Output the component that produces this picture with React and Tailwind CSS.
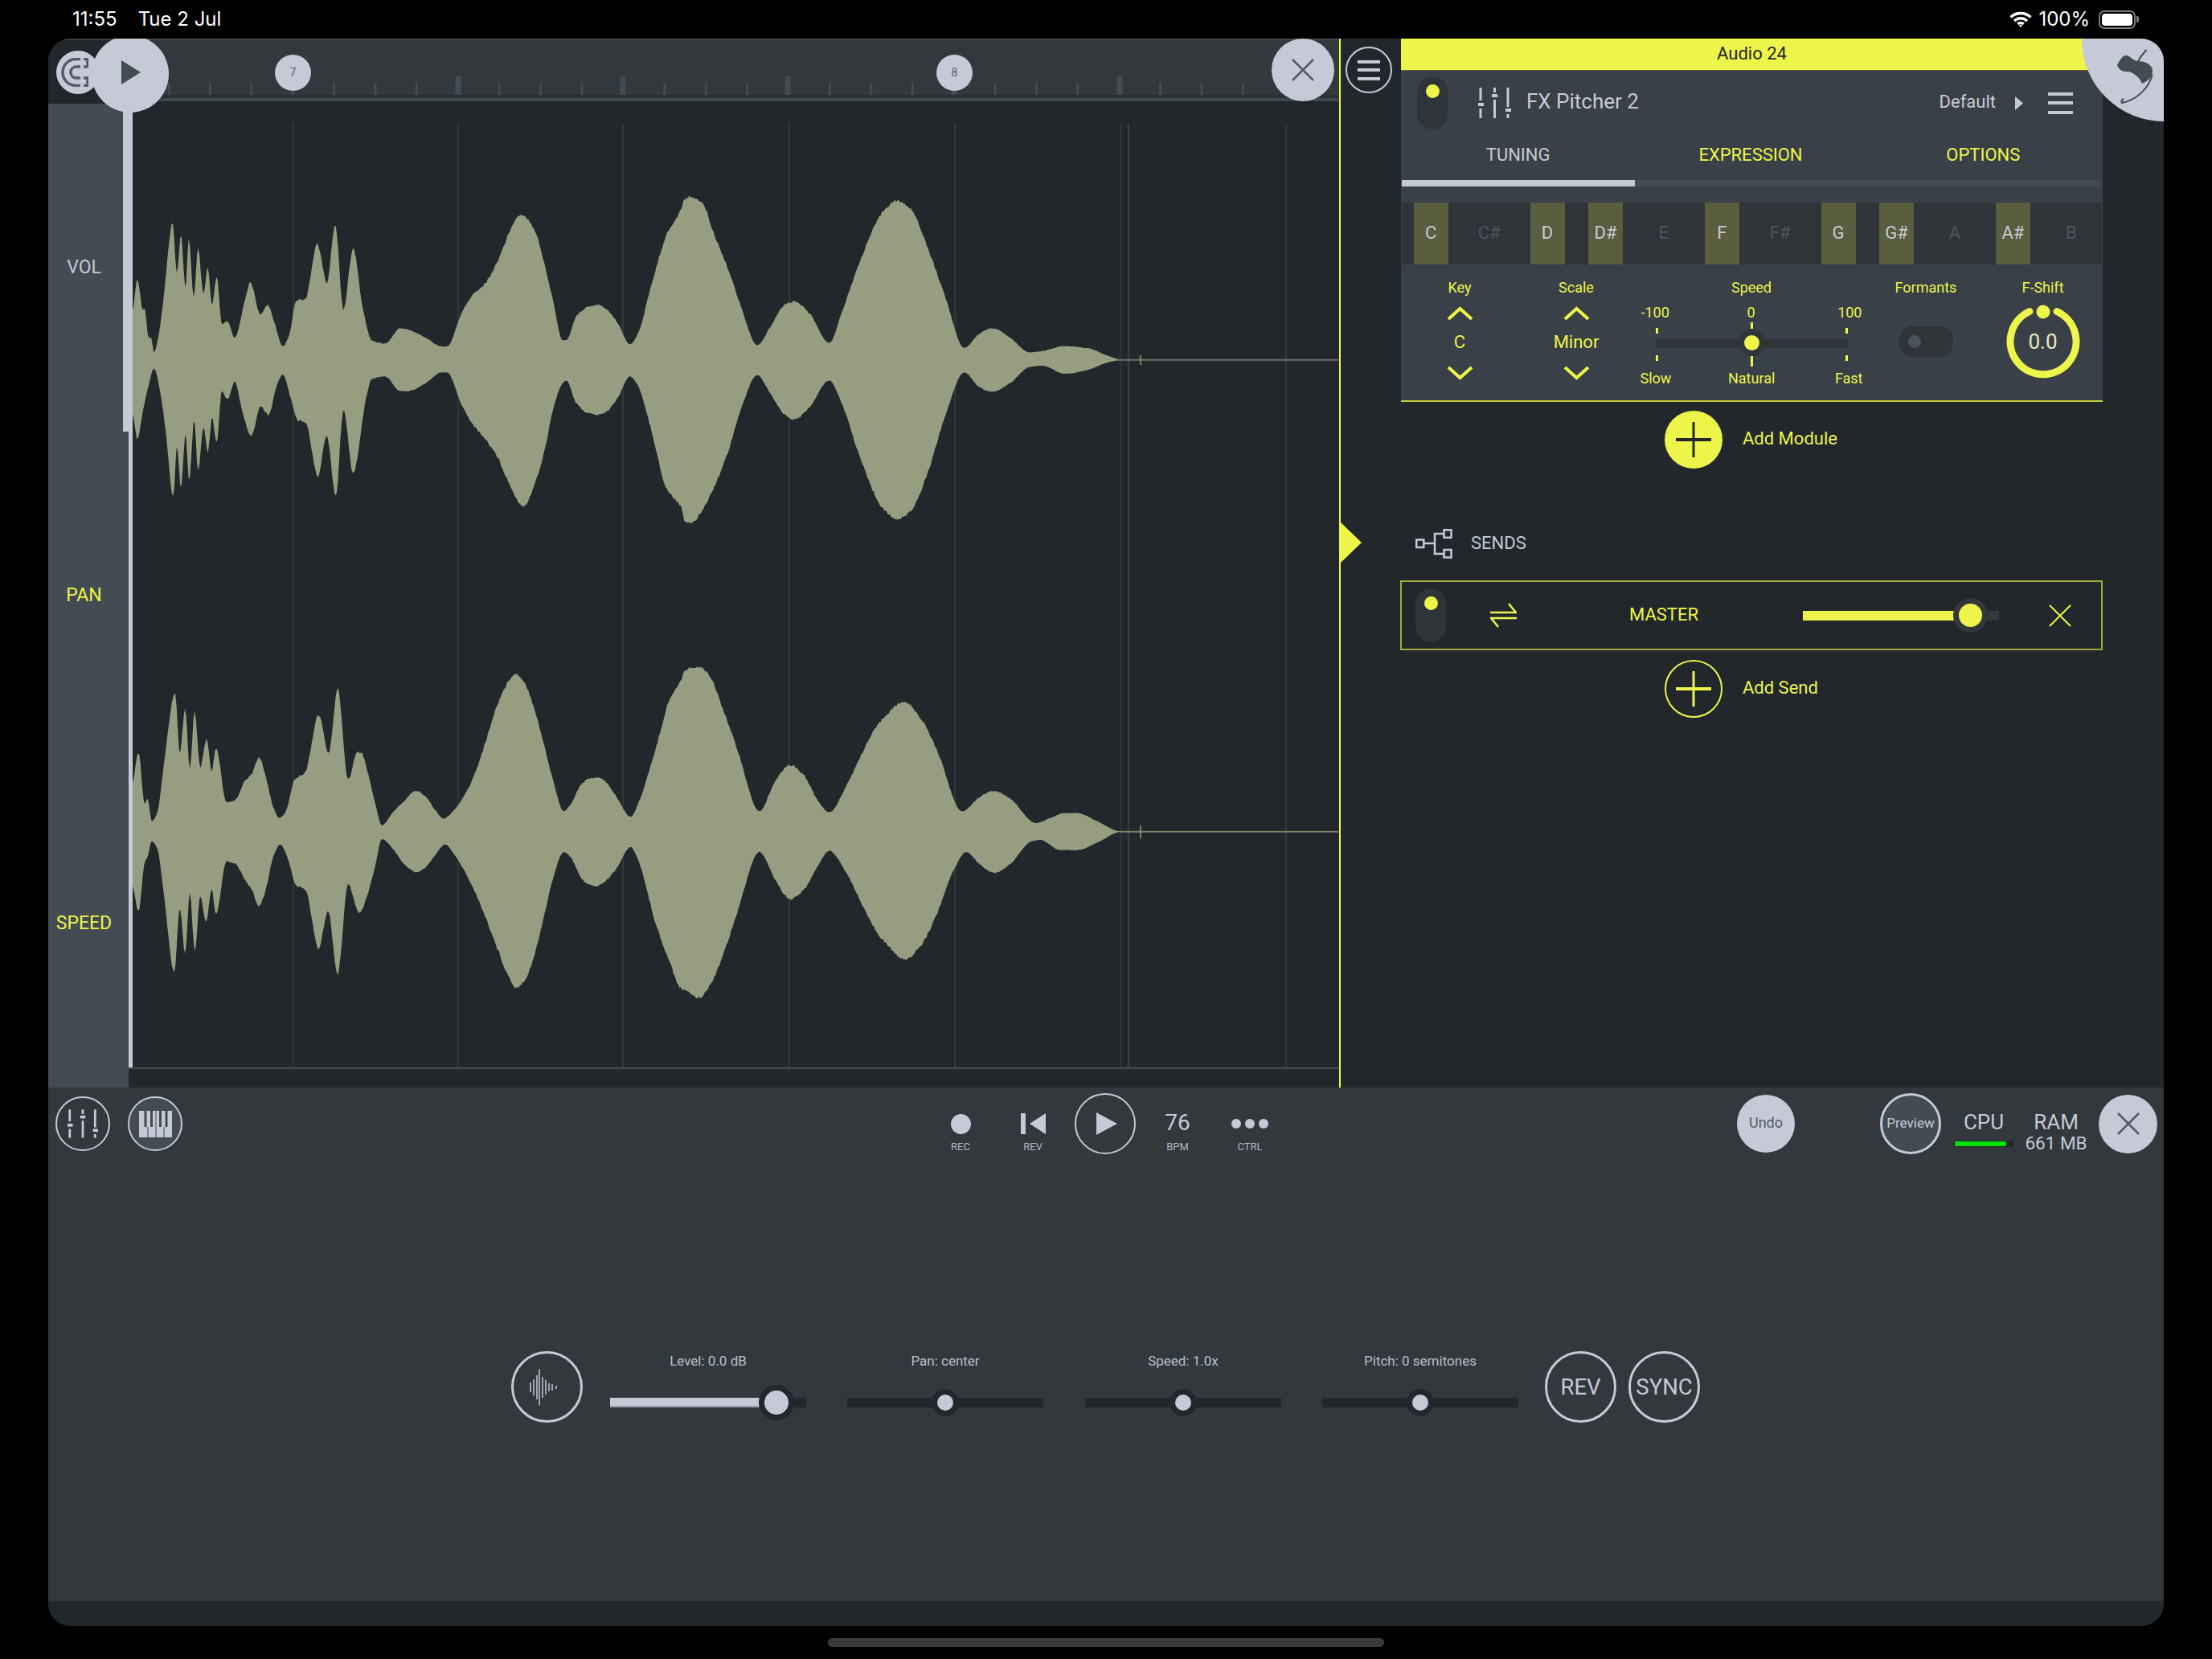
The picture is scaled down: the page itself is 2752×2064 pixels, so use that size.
import React from "react";

// waveform envelopes, read off the zoomed crops (crop coords, converted below)
const part = (pts, x0, sx, y0) => pts.map(([x, y]) => [x0 + x / sx, y0 + y / 3]);

const TOP_UP = [
  ...part([[15,560],[35,490],[47,380],[62,495],[67,490],[78,600],[85,600],[93,655],[105,600],[120,450],[145,170],[157,360],[168,215],[181,420],[190,228],[204,450],[216,268],[231,440],[243,340],[255,480],[268,372],[282,550],[298,540],[318,600],[345,470],[362,395],[390,515],[410,477],[430,550],[452,632],[470,590],[490,460],[515,455],[548,250],[575,395],[598,178],[621,495],[648,268],[675,490],[700,610],[737,622],[780,565],[800,570],[850,600],[895,633],[910,633],[950,510],[985,435],[1015,400],[1045,330],[1075,235],[1095,170],[1117,140],[1155,200],[1180,320],[1205,460],[1232,610],[1242,610],[1270,520],[1300,488],[1325,478],[1350,490],[1385,545],[1420,625],[1440,590],[1480,400],[1520,220],[1567,100]], 150, 2.24, 220),
  ...part([[0,85],[20,75],[45,100],[70,210],[100,330],[130,470],[170,628],[200,560],[235,475],[255,465],[290,510],[335,620],[365,500],[400,340],[435,200],[465,115],[490,90],[525,125],[560,260],[600,440],[645,638],[680,585],[710,565],[750,600],[795,655],[825,650],[875,632],[930,640],[970,665],[998,680],[1010,683]], 850, 1.845, 220),
];
const TOP_DOWN = [
  ...part([[15,810],[35,890],[47,978],[62,875],[78,780],[93,715],[110,800],[125,940],[147,1195],[157,1010],[168,1160],[181,960],[191,1140],[205,910],[216,1100],[231,935],[243,1030],[255,900],[268,995],[282,800],[298,830],[318,765],[340,880],[365,968],[390,855],[412,890],[435,780],[452,738],[475,830],[495,910],[515,915],[550,1118],[574,965],[600,1190],[621,870],[648,1105],[685,820],[700,755],[737,745],[780,800],[800,800],[850,770],[895,730],[910,730],[950,850],[985,930],[1020,985],[1050,1045],[1085,1150],[1122,1228],[1160,1125],[1185,1000],[1205,870],[1232,770],[1242,760],[1270,845],[1300,880],[1325,888],[1350,880],[1385,825],[1420,745],[1440,775],[1480,950],[1520,1160],[1567,1250]], 150, 2.24, 220),
  ...part([[0,1280],[20,1290],[45,1240],[70,1160],[100,1040],[130,880],[170,740],[200,810],[235,890],[255,905],[290,860],[335,760],[365,850],[400,1020],[435,1170],[465,1250],[490,1278],[525,1240],[560,1110],[600,900],[645,730],[680,785],[710,802],[750,770],[795,710],[825,705],[875,735],[930,720],[970,695],[998,685],[1010,683]], 850, 1.845, 220),
];
const BOT_UP = [
  ...part([[15,590],[35,515],[50,405],[67,600],[75,580],[87,665],[103,630],[120,460],[152,185],[165,410],[180,248],[193,470],[206,255],[222,465],[240,360],[254,480],[266,393],[295,595],[320,585],[345,518],[365,490],[385,428],[405,500],[425,610],[442,653],[460,630],[485,510],[515,480],[552,268],[580,410],[605,170],[634,510],[660,408],[670,408],[690,490],[710,600],[728,680],[760,630],[790,590],[822,552],[850,572],[875,620],[900,655],[925,630],[970,540],[1010,400],[1050,230],[1080,145],[1098,115],[1120,135],[1150,230],[1180,380],[1205,510],[1235,628],[1255,600],[1285,525],[1320,502],[1345,510],[1380,570],[1422,648],[1445,590],[1490,400],[1530,210],[1567,120]], 150, 2.24, 800),
  ...part([[0,105],[35,88],[60,120],[90,240],[125,400],[175,628],[210,520],[245,455],[275,490],[310,590],[335,632],[375,530],[430,350],[470,260],[508,220],[545,280],[585,410],[640,628],[680,575],[712,552],[750,580],[810,672],[840,655],[875,635],[905,635],[950,665],[1005,703]], 850, 1.845, 800),
];
const BOT_DOWN = [
  ...part([[15,830],[35,910],[50,1000],[67,820],[75,800],[87,740],[103,770],[120,930],[150,1230],[165,990],[180,1160],[193,935],[207,1155],[222,945],[238,1045],[254,920],[266,1015],[295,815],[320,825],[345,880],[365,920],[385,980],[405,920],[425,800],[445,752],[465,800],[490,905],[515,920],[552,1140],[578,1000],[605,1235],[634,900],[665,1008],[690,930],[710,830],[728,732],[760,770],[790,825],[825,855],[855,830],[880,785],[905,752],[930,790],[970,880],[1010,1000],[1050,1140],[1080,1240],[1102,1285],[1125,1260],[1150,1180],[1180,1020],[1205,880],[1235,780],[1255,800],[1285,880],[1320,908],[1345,895],[1380,845],[1422,762],[1445,820],[1490,1040],[1530,1190],[1567,1295]], 150, 2.24, 800),
  ...part([[0,1290],[35,1325],[60,1280],[90,1170],[125,1000],[175,780],[210,880],[245,955],[275,925],[310,830],[335,775],[375,860],[430,1040],[470,1130],[508,1180],[545,1130],[585,1000],[620,850],[650,780],[680,825],[715,858],[750,825],[800,740],[820,735],[865,773],[905,773],[950,745],[1005,705]], 850, 1.845, 800),
];

// monotone cubic, so the lobes come out round and the spikes stay put
const slope = (pts, i) => {
  if (i <= 0 || i >= pts.length - 1) return 0;
  const d0 = (pts[i][1] - pts[i - 1][1]) / Math.max(pts[i][0] - pts[i - 1][0], 0.01);
  const d1 = (pts[i + 1][1] - pts[i][1]) / Math.max(pts[i + 1][0] - pts[i][0], 0.01);
  if (d0 * d1 <= 0) return 0;
  return (2 * d0 * d1) / (d0 + d1);
};

const sample = (pts, x) => {
  for (let i = 1; i < pts.length; i++) {
    if (x <= pts[i][0]) {
      const [x0, y0] = pts[i - 1];
      const [x1, y1] = pts[i];
      const h = Math.max(x1 - x0, 0.01);
      const t = Math.min(Math.max((x - x0) / h, 0), 1);
      const m0 = slope(pts, i - 1);
      const m1 = slope(pts, i);
      return (
        (2 * t ** 3 - 3 * t ** 2 + 1) * y0 +
        (t ** 3 - 2 * t ** 2 + t) * h * m0 +
        (-2 * t ** 3 + 3 * t ** 2) * y1 +
        (t ** 3 - t ** 2) * h * m1
      );
    }
  }
  return pts[pts.length - 1][1];
};

// small hash so the edges get the same teeth on every render
const noise = (i) => {
  const s = Math.sin(i * 12.9898) * 43758.5453;
  return (s - Math.floor(s)) * 2 - 1;
};

const wavePath = (up, down, cy) => {
  const start = up[0][0];
  const end = up[up.length - 1][0];
  const xs = [];
  for (let x = start; x <= end; x += 1.5) xs.push(x);
  const tooth = (y, i, k) => y + noise(i + k) * Math.min(1.8, Math.abs(y - cy) / 60);
  const top = xs.map((x, i) => `${x.toFixed(1)} ${tooth(sample(up, x), i, 0).toFixed(1)}`);
  const bottom = xs.map((x, i) => `${x.toFixed(1)} ${tooth(sample(down, x), i, 7).toFixed(1)}`).reverse();
  return `M${top.join("L")}L${bottom.join("L")}Z`;
};

const GRID = [365, 570, 775, 982, 1188, 1394, 1600];
const TICKS = Array.from({ length: 27 }, (_, i) => 210 + i * 51.4);
const MAJORS = [570, 775, 980, 1187, 1393];
const NOTES = [
  ["C", true], ["C#", false], ["D", true], ["D#", true], ["E", false], ["F", true],
  ["F#", false], ["G", true], ["G#", true], ["A", false], ["A#", true], ["B", false],
];

function Waveform() {
  return (
    <svg viewBox="160 126 1506 1202" className="block w-[1506px] h-[1202px]">
      {GRID.map((x) => (
        <line key={x} x1={x} x2={x} y1="154" y2="1328" stroke="#31373b" strokeWidth="2" />
      ))}
      <line x1="1404" x2="1404" y1="154" y2="1328" stroke="#444a4e" strokeWidth="1.5" />
      <path d={wavePath(TOP_UP, TOP_DOWN, 447.7)} fill="#979d80" />
      <path d={wavePath(BOT_UP, BOT_DOWN, 1034.7)} fill="#979d80" />
      <line x1="1390" x2="1665" y1="447.7" y2="447.7" stroke="#6d7262" strokeWidth="2" />
      <line x1="1419" x2="1419" y1="442" y2="454" stroke="#979d80" strokeWidth="1.5" />
      <line x1="1394" x2="1665" y1="1034.7" y2="1034.7" stroke="#7b806a" strokeWidth="2" />
      <line x1="1419" x2="1419" y1="1027" y2="1043" stroke="#979d80" strokeWidth="1.5" />
    </svg>
  );
}

function RulerTicks() {
  return (
    <svg viewBox="160 50 1506 68" className="block w-[1506px] h-[68px]">
      {TICKS.map((x) => (
        <rect key={x} x={x - 1.5} y="103" width="3" height="15" fill="#454d50" />
      ))}
      {MAJORS.map((x) => (
        <rect key={x} x={x - 3.5} y="95" width="7" height="23" fill="#434b53" />
      ))}
    </svg>
  );
}

function CrossIcon({ size = 28, color = "#555c66", stroke = 2.5 }) {
  return (
    <svg width={size} height={size} viewBox="0 0 28 28" fill="none" stroke={color} strokeWidth={stroke}>
      <path d="M1 1 27 27M27 1 1 27" />
    </svg>
  );
}

function SlidersIcon({ className }) {
  return (
    <svg viewBox="0 0 41 38" className={className} fill="#c5cad6">
      <rect x="1.5" y="0" width="3" height="16" />
      <rect x="0" y="19" width="7" height="4" />
      <rect x="1.5" y="26" width="3" height="12" />
      <rect x="19" y="0" width="3" height="6" />
      <rect x="17" y="8" width="7" height="4" />
      <rect x="19" y="15" width="3" height="23" />
      <rect x="35.5" y="0" width="3" height="24" />
      <rect x="34" y="26" width="7" height="4" />
      <rect x="35.5" y="33" width="3" height="5" />
    </svg>
  );
}

function PianoIcon() {
  return (
    <svg width="41" height="33" viewBox="0 0 41 33">
      <rect width="41" height="33" fill="#c5cad6" />
      <rect x="6.500" y="0" width="3" height="20" fill="#434b53" />
      <rect x="14" y="0" width="3" height="20" fill="#434b53" />
      <rect x="25" y="0" width="3" height="20" fill="#434b53" />
      <rect x="32.500" y="0" width="3" height="20" fill="#434b53" />
      <rect x="10.500" y="20" width="1" height="13" fill="#434b53" />
      <rect x="20.500" y="0" width="1" height="33" fill="#434b53" />
      <rect x="30.500" y="20" width="1" height="13" fill="#434b53" />
    </svg>
  );
}

function Chevron({ down }) {
  return (
    <svg width="33" height="18" viewBox="0 0 33 18" fill="none" stroke="#eef54a" strokeWidth="4">
      <path d={down ? "M2 2 16.5 15 31 2" : "M2 16 16.5 3 31 16"} />
    </svg>
  );
}

function PowerPill({ h = "h-[66px]", top = "pt-[10px]" }) {
  return (
    <div className={`w-[38px] ${h} ${top} rounded-[19px] bg-[#2f3438] flex justify-center`}>
      <div className="w-[17px] h-[17px] rounded-full bg-[#eef54a]" />
    </div>
  );
}

function TransportItem({ label, children }) {
  return (
    <div className="w-[90px] h-full flex flex-col items-center">
      <div className="h-[44px] mt-[23px] flex items-center justify-center">{children}</div>
      <div className="text-[13px] leading-[14px] text-[#b3b8c3]">{label}</div>
    </div>
  );
}

function BottomSlider({ label, knobLeft, big, fill }) {
  return (
    <div className="w-[244px] flex flex-col items-center pt-[2px]">
      <div className="text-[17px] leading-[20px] text-[#b9bec9]">{label}</div>
      <div className="relative w-full h-[44px] mt-[20px] flex items-center">
        <div className="w-full h-[12px] bg-[#22272b]">
          {fill && <div className="h-full bg-[#c5cad6] border-b-2 border-[#98a0aa]" style={{ width: knobLeft }} />}
        </div>
        <div
          className={`absolute top-1/2 -translate-x-1/2 -translate-y-1/2 rounded-full bg-[#22272b] flex items-center justify-center ${big ? "w-[44px] h-[44px]" : "w-[34px] h-[34px]"}`}
          style={{ left: knobLeft }}
        >
          <div className={`rounded-full bg-[#c5cad6] ${big ? "w-[30px] h-[30px]" : "w-[20px] h-[20px]"}`} />
        </div>
      </div>
    </div>
  );
}

function RingButton({ children, className = "" }) {
  return (
    <div className={`w-[89px] h-[89px] shrink-0 rounded-full border-[3px] border-[#c5cad6] flex items-center justify-center text-[27.5px] text-[#c5cad6] ${className}`}>
      {children}
    </div>
  );
}

export default function App() {
  return (
    <div className="relative w-[2752px] h-[2064px] bg-black font-['Roboto',sans-serif] overflow-hidden">
      {/* status bar */}
      <div className="h-[48px] pl-[90px] pr-[91px] flex items-center justify-between text-white text-[24px] font-['Inter',sans-serif]">
        <div className="flex gap-[26px]">
          <span>11:55</span>
          <span>Tue 2 Jul</span>
        </div>
        <div className="flex items-center">
          <svg width="28" height="20" viewBox="0 0 28 20" fill="none" stroke="#fff" strokeWidth="3.4">
            <path d="M1.5 7.5C8.5 0.8 19.5 0.8 26.5 7.5" />
            <path d="M6 12C10.5 7.6 17.5 7.6 22 12" />
            <path d="M10.3 16C12.5 13.9 15.5 13.9 17.7 16" />
            <circle cx="14" cy="18" r="1.6" fill="#fff" stroke="none" />
          </svg>
          <span className="ml-[8px]">100%</span>
          <div className="ml-[11px] w-[46px] h-[23px] rounded-[7px] border-2 border-[#7d7d7d] p-[2px]">
            <div className="w-full h-full rounded-[4px] bg-white" />
          </div>
          <div className="ml-[1px] w-[3px] h-[8px] rounded-r-[2px] bg-[#7d7d7d]" />
        </div>
      </div>

      {/* app frame */}
      <div className="w-[2632px] h-[1975px] ml-[60px] rounded-[28px] overflow-hidden flex flex-col bg-[#22272b]">
        <div className="h-[1305px] flex">
          {/* editor */}
          <div className="relative w-[1606px] flex">
            <div className="w-[100px] flex flex-col">
              <div className="relative h-[81px] bg-[#22272b] border-t-2 border-[#3a4246]">
                <div className="absolute left-[10px] top-[13px] w-[54px] h-[54px] rounded-full bg-[#c5cad6] flex items-center pl-[6px]">
                  <svg width="34" height="36" viewBox="0 0 34 36" fill="none">
                    <path d="M33 1.500H19C9 1.500 2 9 2 18S9 34.500 19 34.500H33V25H19C15 25 12 22 12 18S15 11 19 11H33Z" stroke="#555c66" strokeWidth="3.5" />
                    <rect x="24" y="0" width="4" height="13" fill="#c5cad6" />
                    <rect x="24" y="23" width="4" height="13" fill="#c5cad6" />
                  </svg>
                </div>
              </div>
              <div className="flex-1 bg-[#434b53] flex flex-col pr-[11px] items-center pt-[191px] gap-[382px] text-[23px] leading-[26px]">
                <div className="text-[#c5cad6]">VOL</div>
                <div className="text-[#eef54a]">PAN</div>
                <div className="text-[#eef54a]">SPEED</div>
              </div>
            </div>
            <div className="w-[1506px] flex flex-col">
              <div className="relative h-[70px] bg-[#33383c] border-t-2 border-[#454d50]">
                <RulerTicks />
                <div className="absolute left-[182px] top-[18px] w-[45px] h-[45px] rounded-full bg-[#c5cad6] flex items-center justify-center text-[14px] text-[#555c66]">7</div>
                <div className="absolute left-[1005px] top-[18px] w-[45px] h-[45px] rounded-full bg-[#c5cad6] flex items-center justify-center text-[14px] text-[#555c66]">8</div>
              </div>
              <div className="h-[4px] bg-[#2a3034]" />
              <div className="h-[4px] bg-[#3e474b]" />
              <Waveform />
              <div className="h-[2px] bg-[#454d50]" />
            </div>

            {/* playhead */}
            <div className="absolute left-[93px] top-0 w-[12px] h-[489px] bg-[#c5cad6]" />
            <div className="absolute left-[100px] top-0 w-[5px] h-[1280px] bg-[#c5cad6]" />
            <div className="absolute left-[54px] top-[-4px] w-[96px] h-[96px] rounded-full bg-[#c5cad6] flex items-center justify-center">
              <svg width="24" height="30" viewBox="0 0 24 30" className="mt-[-4px] mr-[-2px]">
                <path d="M0 0 24 15 0 30Z" fill="#434b53" />
              </svg>
            </div>
            <div className="absolute left-[1522px] top-0 w-[78px] h-[78px] rounded-full bg-[#c5cad6] flex items-center justify-center">
              <CrossIcon />
            </div>
          </div>

          {/* fx column */}
          <div className="relative flex-1 flex border-l-2 border-[#eef54a]">
            <div className="w-[75px] flex justify-center pt-[10px] pr-[5px]">
              <div className="w-[58px] h-[58px] rounded-full border-2 border-[#c5cad6] flex flex-col items-center justify-center gap-[6.5px]">
                <div className="w-[28px] h-[4px] bg-[#c5cad6]" />
                <div className="w-[28px] h-[4px] bg-[#c5cad6]" />
                <div className="w-[28px] h-[4px] bg-[#c5cad6]" />
              </div>
            </div>

            <div className="w-[873px] flex flex-col">
              <div className="h-[39px] pb-[2px] bg-[#eef54a] flex items-center justify-center text-[22px] text-[#22272b]">Audio 24</div>

              <div className="h-[413px] bg-[#394047] border-t border-[#5f6340] border-b-2 border-b-[#c5ca3e] flex flex-col">
                <div className="h-[80px] flex items-center pl-[20px] pr-[37px]">
                  <PowerPill />
                  <SlidersIcon className="ml-[38px] w-[41px] h-[38px]" />
                  <div className="ml-[19px] -mt-[3px] text-[26px] text-[#c5cad6]">FX Pitcher 2</div>
                  <div className="ml-auto -mt-[3px] text-[22px] text-[#c5cad6]">Default</div>
                  <svg width="10" height="17" viewBox="0 0 10 17" className="ml-[24px]">
                    <path d="M0 0 10 8.5 0 17Z" fill="#c5cad6" />
                  </svg>
                  <div className="ml-[31px] flex flex-col gap-[7.5px]">
                    <div className="w-[31px] h-[4px] bg-[#c5cad6]" />
                    <div className="w-[31px] h-[4px] bg-[#c5cad6]" />
                    <div className="w-[31px] h-[4px] bg-[#c5cad6]" />
                  </div>
                </div>

                <div className="h-[49px] grid grid-cols-3 pl-[1px] pr-[4px] items-center text-center text-[22px]">
                  <div className="text-[#c5cad6]">TUNING</div>
                  <div className="text-[#eef54a]">EXPRESSION</div>
                  <div className="text-[#eef54a]">OPTIONS</div>
                </div>

                <div className="h-[8px] mt-[7px] mx-[1px] w-[868px] bg-[#434b53]">
                  <div className="h-full w-[290px] bg-[#c5cad6]" />
                </div>

                <div className="h-[77px] mt-[20px] mx-[1px] pr-[2px] grid grid-cols-12 bg-[#2f3438]">
                  {NOTES.map(([name, on]) => (
                    <div key={name} className="flex justify-center">
                      <div className={`w-[43px] h-full pb-[3px] flex items-center justify-center text-[22px] ${on ? "bg-[#5a5e3e] text-[#c5cad6]" : "text-[#4e555d]"}`}>
                        {name}
                      </div>
                    </div>
                  ))}
                </div>

                <div className="flex-1 grid grid-cols-[146px_144px_292px_142px_149px] text-[#eef54a] text-[18px] leading-[22px]">
                  <div className="flex flex-col items-center pt-[18px]">
                    <div>Key</div>
                    <div className="mt-[12px]"><Chevron /></div>
                    <div className="mt-[13px] h-[28px] text-[22px] leading-[28px]">C</div>
                    <div className="mt-[15px]"><Chevron down /></div>
                  </div>
                  <div className="flex flex-col items-center pt-[18px]">
                    <div>Scale</div>
                    <div className="mt-[12px]"><Chevron /></div>
                    <div className="mt-[13px] h-[28px] text-[22px] leading-[28px]">Minor</div>
                    <div className="mt-[15px]"><Chevron down /></div>
                  </div>
                  <div className="flex flex-col items-center pt-[18px]">
                    <div>Speed</div>
                    <div className="mt-[9px] w-[275px] flex justify-between">
                      <span>-100</span><span className="mr-[6px]">0</span><span>100</span>
                    </div>
                    <div className="relative w-[239px] h-[54px] flex items-center">
                      <div className="w-full h-[11px] bg-[#2f3438]" />
                      <div className="absolute left-[0px] top-[8px] w-[3px] h-[7px] bg-[#eef54a]" />
                      <div className="absolute left-[0px] top-[42px] w-[3px] h-[7px] bg-[#eef54a]" />
                      <div className="absolute right-[0px] top-[8px] w-[3px] h-[7px] bg-[#eef54a]" />
                      <div className="absolute right-[0px] top-[42px] w-[3px] h-[7px] bg-[#eef54a]" />
                      <div className="absolute left-[118px] top-[1px] w-[3px] h-[8px] bg-[#eef54a]" />
                      <div className="absolute left-[118px] top-[43px] w-[3px] h-[13px] bg-[#eef54a]" />
                      <div className="absolute left-[103px] top-[10px] w-[33px] h-[33px] rounded-full bg-[#2f3438] flex items-center justify-center">
                        <div className="w-[19px] h-[19px] rounded-full bg-[#eef54a]" />
                      </div>
                    </div>
                    <div className="mt-[6px] w-[277px] flex justify-between">
                      <span>Slow</span><span className="mr-[4px]">Natural</span><span>Fast</span>
                    </div>
                  </div>
                  <div className="flex flex-col items-center pt-[18px]">
                    <div>Formants</div>
                    <div className="mt-[37px] w-[67px] h-[38px] rounded-[17px] bg-[#2f3438] flex items-center pl-[11px]">
                      <div className="w-[16px] h-[16px] rounded-full bg-[#4a525a]" />
                    </div>
                  </div>
                  <div className="flex flex-col items-center pt-[18px]">
                    <div>F-Shift</div>
                    <div className="relative mt-[10px] w-[92px] h-[92px]">
                      <svg width="92" height="92" viewBox="0 0 92 92" fill="none">
                        <path d="M29 8.5A41 41 0 1 0 63 8.5" stroke="#eef54a" strokeWidth="9" strokeLinecap="round" />
                        <circle cx="46" cy="9" r="8.5" fill="#eef54a" />
                      </svg>
                      <div className="absolute inset-0 flex items-center justify-center text-[26px] text-[#e6e9c0]">0.0</div>
                    </div>
                  </div>
                </div>
              </div>

              <div className="mt-[11px] pl-[328px] flex items-center gap-[25px]">
                <div className="w-[72px] h-[72px] rounded-full bg-[#eef54a] flex items-center justify-center">
                  <svg width="44" height="44" viewBox="0 0 44 44" stroke="#22272b" fill="none">
                    <path d="M0 22H44" strokeWidth="4" />
                    <path d="M22 0V44" strokeWidth="3" />
                  </svg>
                </div>
                <div className="-mt-[3px] text-[22px] text-[#eef54a]">Add Module</div>
              </div>

              <div className="mt-[75px] pl-[18px] flex items-center gap-[23px]">
                <svg width="46" height="37" viewBox="0 0 46 37" fill="none" stroke="#c5cad6" strokeWidth="2.5">
                  <rect x="1.3" y="13.5" width="9" height="9.5" />
                  <rect x="35.5" y="1.3" width="9" height="9.5" />
                  <rect x="35.5" y="26" width="9" height="9.5" />
                  <path d="M10.5 18H24M35.5 6H24V31H35.5" />
                </svg>
                <div className="-mt-[3px] text-[22px] text-[#c5cad6]">SENDS</div>
              </div>

              <div className="mt-[27px] -ml-[1px] w-[874px] h-[87px] border-2 border-[#a5a93a] flex items-center pl-[17px]">
                <PowerPill h="h-[67px]" top="pt-[10px]" />
                <svg width="33" height="31" viewBox="0 0 33 31" fill="none" stroke="#eef54a" strokeWidth="2.5" className="ml-[55px]">
                  <path d="M0 12H32L23 1" />
                  <path d="M33 19H1L10 30" />
                </svg>
                <div className="w-[356px] pl-[10px] -mt-[3px] text-center text-[22px] text-[#eef54a]">MASTER</div>
                <div className="relative w-[244px] h-[12px] bg-[#33383c]">
                  <div className="h-full w-[208px] bg-[#eef54a]" />
                  <div className="absolute left-[187px] top-[-16px] w-[43px] h-[43px] rounded-full bg-[#33383c] flex items-center justify-center">
                    <div className="w-[29px] h-[29px] rounded-full bg-[#eef54a]" />
                  </div>
                </div>
                <div className="ml-[62px]"><CrossIcon color="#eef54a" stroke={2} /></div>
              </div>

              <div className="mt-[12px] pl-[328px] flex items-center gap-[25px]">
                <div className="w-[72px] h-[72px] rounded-full border-2 border-[#eef54a] flex items-center justify-center">
                  <svg width="44" height="44" viewBox="0 0 44 44" stroke="#eef54a" fill="none">
                    <path d="M0 22H44" strokeWidth="4" />
                    <path d="M22 0V44" strokeWidth="3" />
                  </svg>
                </div>
                <div className="-mt-[3px] text-[22px] text-[#eef54a]">Add Send</div>
              </div>
            </div>

            {/* logo in the corner */}
            <div className="absolute right-0 top-0 w-[102px] h-[103px] rounded-bl-[102px] bg-[#c5cad6]">
              <svg width="102" height="103" viewBox="0 0 102 103" fill="none">
                <path d="M44 33C47 28 50 21 55 21C60 21 64 28 70 28C78 28 88 32 88 40C88 47 84 52 75 56C72 48 66 44 59 41C52 42 46 39 44 33Z" fill="#434b53" />
                <path d="M80.500 14C76 19 72 24 69.700 29" stroke="#434b53" strokeWidth="2" />
                <path d="M87.700 45C84 60 70 76 50 80C49 78 50 76 52 75" stroke="#434b53" strokeWidth="2" />
              </svg>
            </div>
            {/* send marker on the divider */}
            <svg width="26" height="50" viewBox="0 0 26 50" className="absolute left-0 top-[602px]">
              <path d="M0 0 26 25 0 50Z" fill="#eef54a" />
            </svg>
          </div>
        </div>

        {/* bottom panel */}
        <div className="flex-1 bg-[#33383c] flex flex-col">
          <div className="h-[90px] flex items-center pl-[9px]">
            <div className="w-[68px] h-[68px] rounded-full border-2 border-[#c5cad6] flex items-center justify-center">
              <SlidersIcon className="w-[38px] h-[40px]" />
            </div>
            <div className="ml-[22px] w-[68px] h-[68px] rounded-full border-2 border-[#c5cad6] bg-[#434b53] flex items-center justify-center">
              <PianoIcon />
            </div>

            <div className="ml-[923px] h-full flex">
              <TransportItem label="REC">
                <div className="w-[25px] h-[25px] rounded-full bg-[#c5cad6]" />
              </TransportItem>
              <TransportItem label="REV">
                <svg width="31" height="26" viewBox="0 0 31 26" fill="#c5cad6">
                  <rect x="0" y="0" width="6" height="26" />
                  <path d="M31 0V26L11 13Z" />
                </svg>
              </TransportItem>
              <div className="w-[90px] h-full flex items-center justify-center">
                <div className="w-[76px] h-[76px] rounded-full border-2 border-[#c5cad6] flex items-center justify-center">
                  <svg width="26" height="28" viewBox="0 0 26 28" className="ml-[3px]">
                    <path d="M0 0 26 14 0 28Z" fill="#c5cad6" />
                  </svg>
                </div>
              </div>
              <TransportItem label="BPM">
                <span className="-mt-[2px] text-[28px] text-[#c5cad6]">76</span>
              </TransportItem>
              <TransportItem label="CTRL">
                <div className="flex gap-[5px]">
                  <div className="w-[12px] h-[12px] rounded-full bg-[#c5cad6]" />
                  <div className="w-[12px] h-[12px] rounded-full bg-[#c5cad6]" />
                  <div className="w-[12px] h-[12px] rounded-full bg-[#c5cad6]" />
                </div>
              </TransportItem>
            </div>

            <div className="ml-[561px] w-[72px] h-[72px] pb-[3px] rounded-full bg-[#c5cad6] flex items-center justify-center text-[18px] text-[#555c66]">Undo</div>
            <div className="ml-[106px] w-[76px] h-[76px] rounded-full border-[3px] border-[#c5cad6] bg-[#434b53] flex items-center justify-center text-[17px] text-[#c5cad6]">Preview</div>
            <div className="ml-[16px] w-[74px] self-start mt-[28px] flex flex-col items-center">
              <div className="text-[26px] leading-[30px] text-[#c5cad6]">CPU</div>
              <div className="mt-[8px] w-full h-[8px] bg-[#22272b] p-[1px] pr-[9px]">
                <div className="h-full bg-[#00e000]" />
              </div>
            </div>
            <div className="ml-[13px] w-[80px] self-start mt-[28px] flex flex-col items-center">
              <div className="text-[26px] leading-[30px] text-[#c5cad6]">RAM</div>
              <div className="-mt-[1px] whitespace-nowrap text-[22.5px] leading-[24px] text-[#c5cad6]">661 MB</div>
            </div>
            <div className="ml-[13px] w-[73px] h-[73px] rounded-full bg-[#c5cad6] flex items-center justify-center">
              <CrossIcon />
            </div>
          </div>

          <div className="mt-[238px] h-[89px] flex pl-[576px]">
            <RingButton>
              <svg width="36" height="46" viewBox="0 0 36 46" stroke="#c5cad6" strokeWidth="1.5" className="-ml-[10px]">
                <path d="M2 17V29M6 13V33M10 8V38M13 0.500V45.500M17 10V36M21 14V32M25 18V28M29 19V27M34 21V25" />
              </svg>
            </RingButton>
            <div className="ml-[34px]"><BottomSlider label="Level: 0.0 dB" knobLeft={207} big fill /></div>
            <div className="ml-[51px]"><BottomSlider label="Pan: center" knobLeft={122} /></div>
            <div className="ml-[52px]"><BottomSlider label="Speed: 1.0x" knobLeft={122} /></div>
            <div className="ml-[51px]"><BottomSlider label="Pitch: 0 semitones" knobLeft={122} /></div>
            <RingButton className="ml-[33px]">REV</RingButton>
            <RingButton className="ml-[15px]">SYNC</RingButton>
          </div>
        </div>

        <div className="h-[32px] bg-[#22272b] border-t border-[#2f3438]" />
      </div>

      {/* home indicator */}
      <div className="mt-[15px] mx-auto w-[692px] h-[11px] rounded-full bg-[#3a3a3a]" />
    </div>
  );
}
